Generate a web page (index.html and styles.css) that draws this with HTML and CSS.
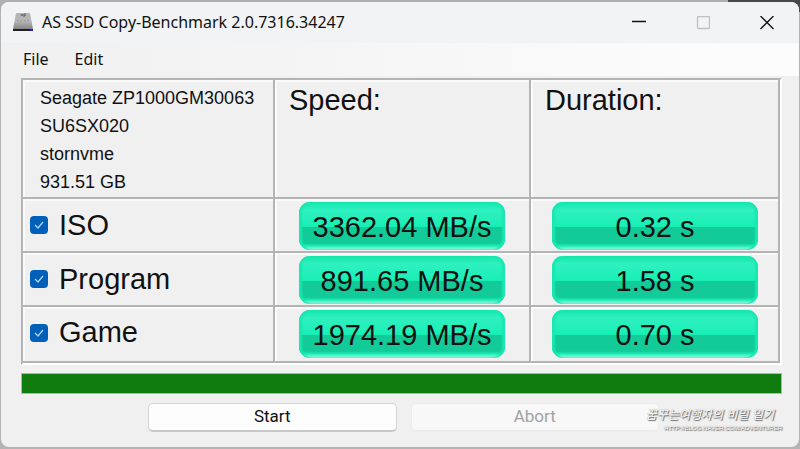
FILE: index.html
```
<!doctype html>
<html lang="en">
  <head>
    <meta charset="UTF-8" />
    <title>AS SSD Copy-Benchmark</title>
    <link rel="stylesheet" href="styles.css">
  </head>
  <body>
    <div class="window">
      <header class="titlebar">
        <svg class="app-icon" width="22" height="20" viewBox="0 0 22 20">
          <defs>
            <linearGradient id="drive" x1="0" y1="0" x2="0" y2="1">
              <stop offset="0" stop-color="#b4b4b4" />
              <stop offset="0.5" stop-color="#b8b8b8" />
              <stop offset="1" stop-color="#858585" />
            </linearGradient>
          </defs>
          <path d="M5 0h12q1 0 1.200 1L21 16H1L3.800 1q.2-1 1.200-1z" fill="url(#drive)" />
          <path d="M9 3l1-2 1 2M14 1h-2v1h1v1h-2" stroke="#666" fill="none" />
          <path d="M5 8l2-1M8 9l2-2M12 7l2 2M15 8l2-1" stroke="#999" fill="none" />
          <path d="M1 16h20v2H1z" fill="#202020" />
          <path d="M18 16h3v2h-3z" fill="#2418d8" />
        </svg>
        <h1>AS SSD Copy-Benchmark 2.0.7316.34247</h1>
        <div class="window-buttons">
          <button type="button" aria-label="Minimize">
            <svg width="14" height="14" viewBox="0 0 14 14"><path d="M0 5.500h14" /></svg>
          </button>
          <button type="button" aria-label="Maximize" disabled>
            <svg width="14" height="14" viewBox="0 0 14 14"><rect x="1.500" y="0.5" width="12" height="12" rx="1" /></svg>
          </button>
          <button type="button" aria-label="Close">
            <svg width="14" height="14" viewBox="0 0 14 14"><path d="M0.500 0l13 13M13.500 0l-13 13" /></svg>
          </button>
        </div>
      </header>

      <nav class="menu">
        <button type="button">File</button>
        <button type="button">Edit</button>
      </nav>

      <main>
        <table class="results">
          <thead>
            <tr>
              <td class="drive-info">
                <p>Seagate ZP1000GM30063</p>
                <p>SU6SX020</p>
                <p>stornvme</p>
                <p>931.51 GB</p>
              </td>
              <th scope="col">Speed:</th>
              <th scope="col">Duration:</th>
            </tr>
          </thead>
          <tbody>
            <tr>
              <td class="test"><label><input type="checkbox" checked />ISO</label></td>
              <td><div class="value">3362.04 MB/s</div></td>
              <td><div class="value">0.32 s</div></td>
            </tr>
            <tr>
              <td class="test"><label><input type="checkbox" checked />Program</label></td>
              <td><div class="value">891.65 MB/s</div></td>
              <td><div class="value">1.58 s</div></td>
            </tr>
            <tr>
              <td class="test"><label><input type="checkbox" checked />Game</label></td>
              <td><div class="value">1974.19 MB/s</div></td>
              <td><div class="value">0.70 s</div></td>
            </tr>
          </tbody>
        </table>

        <div class="progress" role="progressbar" aria-label="Progress" aria-valuenow="100"></div>

        <div class="actions">
          <button type="button">Start</button>
          <button type="button" disabled>Abort</button>
        </div>
      </main>

      <div class="watermark" lang="ko">
        <span class="watermark-name">꿈꾸는여행자의 비밀 일기</span>
        <span class="watermark-url">HTTP://BLOG.NAVER.COM/ADVENTURER</span>
      </div>
    </div>
  </body>
</html>
```
FILE: styles.css
```
:root {
  --face: #f0f0f0;
  --line: #b4b4b4;
  --text: #111;
  --accent: #005fb8;
}

* {
  margin: 0;
  padding: 0;
  box-sizing: border-box;
}

body {
  padding: 2px 1px;
  min-height: 100vh;
  display: flex;
  background: linear-gradient(90deg, #b0b0b0 91%, #484848 91%) top / 100% 12px no-repeat #b4b4b4;
  font-family: "Liberation Sans", Arial, sans-serif;
  color: var(--text);
}

button {
  border: none;
  background: none;
  font: inherit;
  color: inherit;
}

.window {
  position: relative;
  flex: 1;
  border-radius: 8px;
  overflow: hidden;
  background-color: var(--face);
}

.titlebar {
  display: flex;
  align-items: center;
  height: 41px;
  padding-left: 11px;
  background-color: #f1f3f5;
}

.titlebar h1 {
  flex: 1;
  margin-left: 8px;
  padding-bottom: 2px;
  font: 16px "Noto Sans", sans-serif;
}

.window-buttons {
  display: flex;
}

.window-buttons button {
  display: flex;
  align-items: center;
  justify-content: center;
  width: 64px;
  height: 41px;
}

.window-buttons svg {
  fill: none;
  stroke: #111;
  stroke-width: 1.3;
}

.window-buttons button:disabled svg {
  stroke: #c0c0c0;
}

.menu {
  display: flex;
  gap: 26px;
  height: 33px;
  padding: 0 22px 2px;
  background: linear-gradient(90deg, #f0f0f0, #f5f5f5 40%, #fcfcfc 90%);
  font: 16px "Noto Sans", sans-serif;
}

main {
  padding: 2px 17px 14px 20px;
}

.results {
  width: 100%;
  table-layout: fixed;
  border-spacing: 0;
  border: 2px solid var(--line);
  border-color: var(--line) #fff #fff var(--line);
  font-size: 29px;
}

.results th,
.results td {
  border-right: 2px solid var(--line);
  border-bottom: 2px solid var(--line);
  box-shadow: inset 2px 2px #fafafa;
}

.results th {
  padding: 3px 14px;
  font-weight: normal;
  line-height: 34px;
  text-align: left;
  vertical-align: top;
}

.results thead td {
  width: 252px;
}

.results th:last-child {
  width: 249px;
}

.results .drive-info {
  height: 119px;
  padding: 2px 0 0 17px;
  font-size: 18px;
  line-height: 28px;
}

.results tbody td {
  padding: 3px 24px 1px;
}

.results tbody td:last-child {
  padding-right: 20px;
  padding-left: 21px;
}

.results tbody tr:last-child td {
  padding-bottom: 3px;
}

.results tbody .test {
  padding: 0 7px;
}

.test label {
  display: flex;
  align-items: center;
  gap: 11px;
}

.test input {
  appearance: none;
  width: 18px;
  height: 18px;
  border-radius: 4px;
  background: var(--accent) url("data:image/svg+xml,%3Csvg xmlns='http://www.w3.org/2000/svg' viewBox='0 0 18 18'%3E%3Cpath d='M5 9l3 3 5-6' fill='none' stroke='%23b8d4ee' stroke-width='1.3'/%3E%3C/svg%3E");
}

.value {
  height: 48px;
  padding-top: 2px;
  border-radius: 11px;
  background: linear-gradient(#12e6ac, #30f0c0 16%, #18efb5 51%, #12cb99 52%, #12cb99 86%, #14eeb5 91%, #b8f7e5);
  box-shadow: inset 3px 0 2px #18e8b0, inset -3px 0 2px #18e8b0;
  line-height: 46px;
  text-align: center;
}

.progress {
  height: 21px;
  margin-top: 8px;
  border: 1px solid #b4b4b4;
  background-color: #107c10;
}

.actions {
  display: flex;
  gap: 14px;
  padding: 9px 123px 0 127px;
}

.actions button {
  flex: 1;
  height: 29px;
  padding-bottom: 2px;
  border: 1px solid #d4d4d4;
  border-bottom: 2px solid #c8c8c8;
  border-radius: 5px;
  background-color: #fdfdfd;
  font: 17px Roboto, sans-serif;
}

.actions button:disabled {
  border-color: #ececec;
  background-color: #f8f8f8;
  color: #a2a2a2;
}

.watermark {
  position: absolute;
  right: 17px;
  bottom: 14px;
  display: flex;
  flex-direction: column;
  align-items: flex-end;
  color: #fff;
  text-shadow: 1px 1px 1px #555, 0 0 1px #888;
  white-space: nowrap;
}

.watermark-name {
  margin-right: 8px;
  font: italic 12px/18px "Noto Sans CJK KR", sans-serif;
}

.watermark-url {
  font: 6px/10px "Liberation Sans", Arial, sans-serif;
}
```
